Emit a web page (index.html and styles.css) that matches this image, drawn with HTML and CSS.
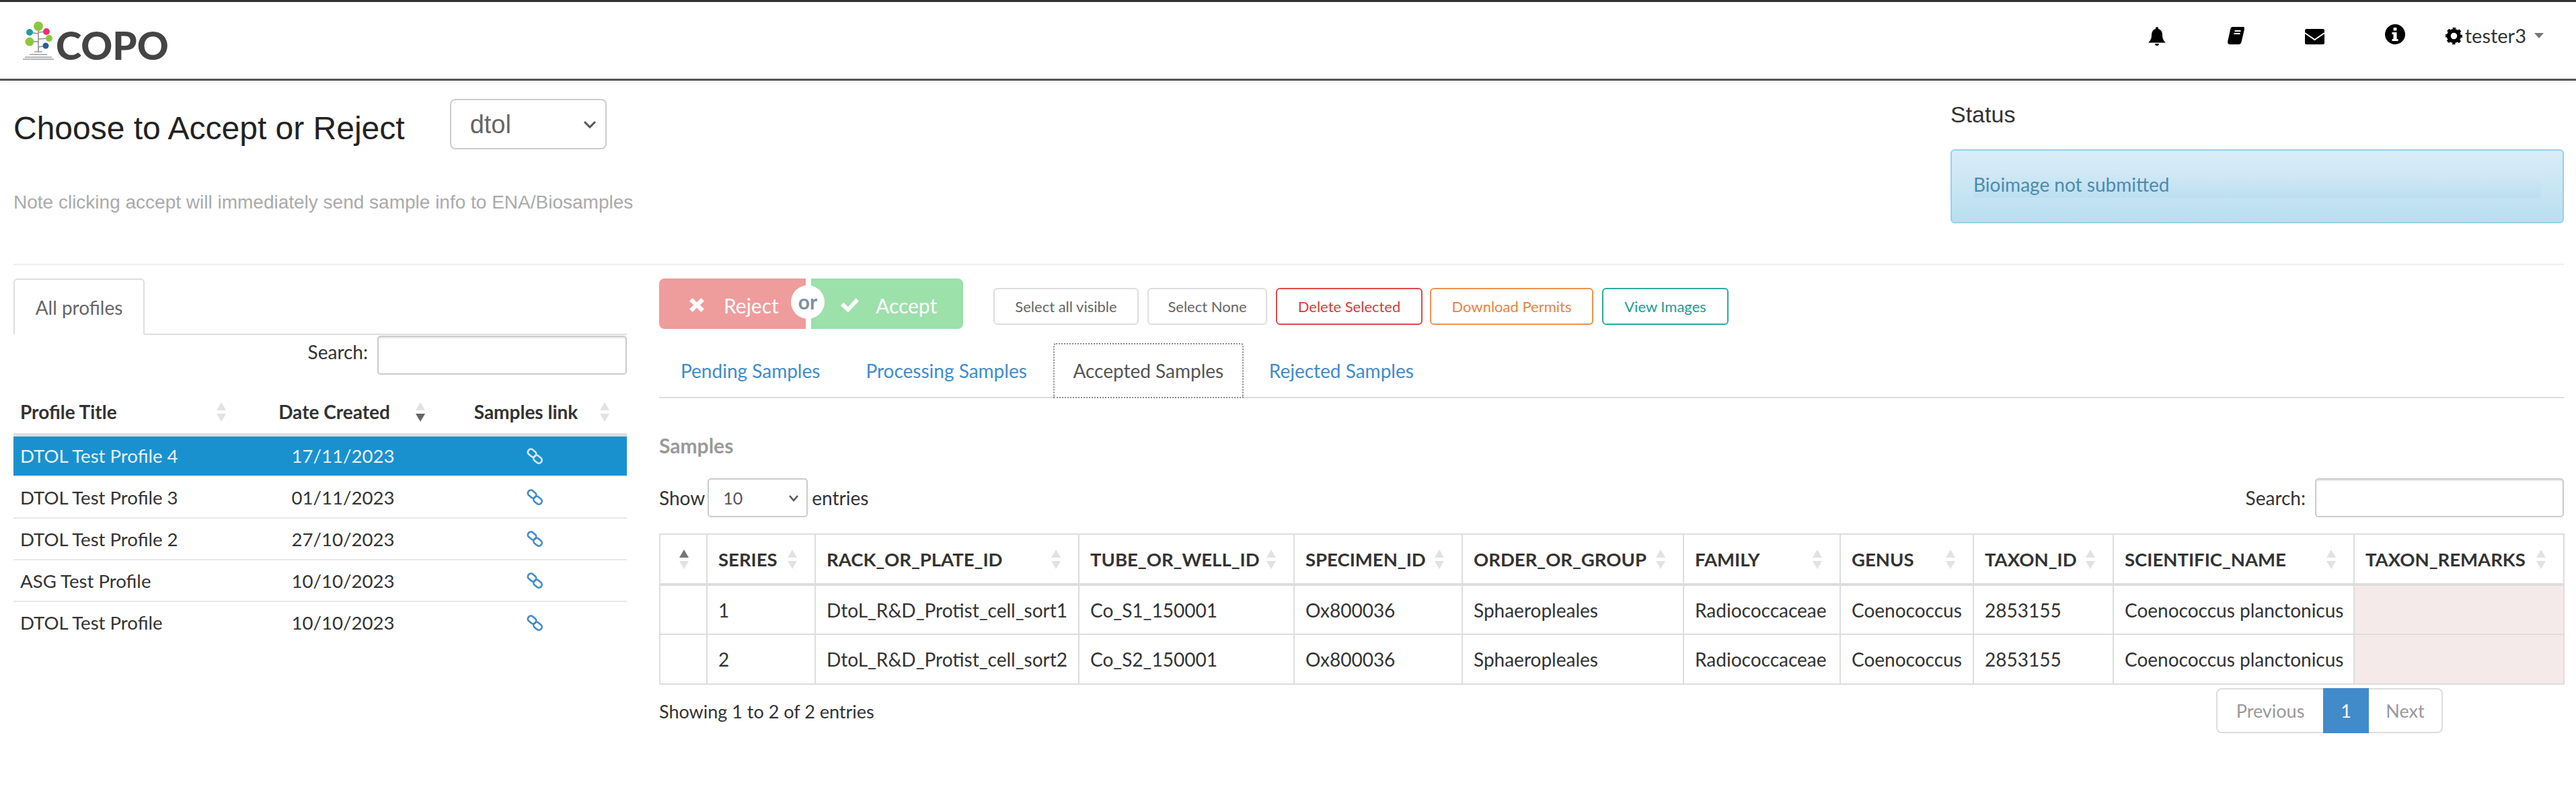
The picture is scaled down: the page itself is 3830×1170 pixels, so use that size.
FILE: index.html
```html
<!DOCTYPE html>
<html lang="en">
<head>
    <meta charset="UTF-8">
    <title>COPO - Accept or Reject Samples</title>
    <link rel="stylesheet" href="styles.css">
</head>
<body>
    <header class="topbar">
        <a class="logo">
            <svg class="logo-tree" viewBox="0 0 46 58" width="46" height="58">
                <path d="M23 6V46M23 18L10 16M23 16L35 15M23 30L10 30M23 26L39 25M23 38L34 36" stroke="#8a8f96" stroke-width="1.6" fill="none"/>
                <circle cx="23" cy="7" r="7" fill="#8cc63f"/>
                <circle cx="10" cy="16" r="5" fill="#1f9ea3"/>
                <circle cx="35" cy="15" r="5" fill="#e8336d"/>
                <circle cx="39" cy="25" r="5" fill="#8cc63f"/>
                <circle cx="10" cy="30" r="6.5" fill="#8cc63f"/>
                <circle cx="34" cy="36" r="4.5" fill="#2b5c9e"/>
                <path d="M17 45H29M10 49H36M3 53H43M0 56H46" stroke="#9a9da1" stroke-width="1.6" fill="none"/>
            </svg>
            <span class="logo-text">COPO</span>
        </a>
        <nav class="topnav">
            <svg class="nav-icon icon-bell" viewBox="0 0 26 28" width="26" height="28"><path d="M13 0c1.1 0 2 .9 2 2v1c4 1 6 4.5 6 9 0 5 1.5 8 5 11.500H0C3.500 20 5 17 5 12c0-4.500 2-8 6-9V2c0-1.100.9-2 2-2zM10 25h6c0 1.800-1.300 3-3 3s-3-1.200-3-3z"/></svg>
            <svg class="nav-icon icon-book" viewBox="0 0 25 26" width="25" height="26"><path d="M7 0h16c1.500 0 2.200 1 1.800 2.500L20.500 21c-.4 1.600-1.500 3-3.500 3H4c-1.500 0-1.800-1-1.400-2h14.400c1.500 0 2.300-.7 2.700-2L24.500 3l.5.5-4.500 19c-.5 2-2 3.500-4 3.500H3.500C1 26-.5 24 .2 21.500L4.500 2C4.800.800 5.800 0 7 0z"/><path d="M10.500 6h9M9.500 10h9" stroke="#fff" stroke-width="2"/></svg>
            <svg class="nav-icon icon-mail" viewBox="0 0 29 23" width="29" height="23"><rect width="29" height="23" rx="2.500"/><path d="M0 6L14.500 16L29 6" stroke="#fff" stroke-width="2" fill="none"/></svg>
            <svg class="nav-icon icon-info" viewBox="0 0 30 30" width="30" height="30"><circle cx="15" cy="15" r="15"/><rect x="12.500" y="5" width="5" height="4.500" rx="1" fill="#fff"/><path d="M10.500 12h7v10h2v3h-9v-3h2v-7h-2z" fill="#fff"/></svg>
            <span class="user-menu">
                <svg class="icon-gear" viewBox="0 0 26 26" width="25" height="25"><circle cx="13" cy="13" r="8" fill="none" stroke="#000" stroke-width="6"/><circle cx="13" cy="13" r="11" fill="none" stroke="#000" stroke-width="4.500" stroke-dasharray="4.300 4.340" stroke-dashoffset="2.100"/></svg>
                <span class="user-name">tester3</span>
                <i class="caret"></i>
            </span>
        </nav>
    </header>

    <main class="page">
        <section class="intro">
            <div class="intro-left">
                <div class="title-row">
                    <h1>Choose to Accept or Reject</h1>
                    <select class="group-select"><option>dtol</option></select>
                </div>
                <p class="note">Note clicking accept will immediately send sample info to ENA/Biosamples</p>
            </div>
            <div class="status">
                <h2>Status</h2>
                <div class="alert"><p>Bioimage not submitted</p></div>
            </div>
        </section>

        <section class="content">
            <aside class="profiles">
                <ul class="tabs tabs-left"><li class="tab active">All profiles</li></ul>
                <div class="search-row search-left">
                    <label>Search:</label><input type="text">
                </div>
                <table class="profile-table">
                    <colgroup><col class="p1"><col class="p2"><col class="p3"></colgroup>
                    <thead>
                        <tr>
                            <th><div class="th-in left"><span>Profile Title</span><i class="sort"></i></div></th>
                            <th><div class="th-in"><span>Date Created</span><i class="sort desc"></i></div></th>
                            <th><div class="th-in"><span>Samples link</span><i class="sort"></i></div></th>
                        </tr>
                    </thead>
                    <tbody>
                        <tr class="selected">
                            <td>DTOL Test Profile 4</td><td class="center">17/11/2023</td>
                            <td class="center"><svg class="chain" viewBox="0 0 27 26" width="27" height="26"><rect x="2.500" y="4" width="13" height="9" rx="4" transform="rotate(40 9 8.500)"/><rect x="11" y="13.300" width="13" height="9" rx="4" transform="rotate(40 17.500 17.800)"/></svg></td>
                        </tr>
                        <tr>
                            <td>DTOL Test Profile 3</td><td class="center">01/11/2023</td>
                            <td class="center"><svg class="chain" viewBox="0 0 27 26" width="27" height="26"><rect x="2.500" y="4" width="13" height="9" rx="4" transform="rotate(40 9 8.500)"/><rect x="11" y="13.300" width="13" height="9" rx="4" transform="rotate(40 17.500 17.800)"/></svg></td>
                        </tr>
                        <tr>
                            <td>DTOL Test Profile 2</td><td class="center">27/10/2023</td>
                            <td class="center"><svg class="chain" viewBox="0 0 27 26" width="27" height="26"><rect x="2.500" y="4" width="13" height="9" rx="4" transform="rotate(40 9 8.500)"/><rect x="11" y="13.300" width="13" height="9" rx="4" transform="rotate(40 17.500 17.800)"/></svg></td>
                        </tr>
                        <tr>
                            <td>ASG Test Profile</td><td class="center">10/10/2023</td>
                            <td class="center"><svg class="chain" viewBox="0 0 27 26" width="27" height="26"><rect x="2.500" y="4" width="13" height="9" rx="4" transform="rotate(40 9 8.500)"/><rect x="11" y="13.300" width="13" height="9" rx="4" transform="rotate(40 17.500 17.800)"/></svg></td>
                        </tr>
                        <tr>
                            <td>DTOL Test Profile</td><td class="center">10/10/2023</td>
                            <td class="center"><svg class="chain" viewBox="0 0 27 26" width="27" height="26"><rect x="2.500" y="4" width="13" height="9" rx="4" transform="rotate(40 9 8.500)"/><rect x="11" y="13.300" width="13" height="9" rx="4" transform="rotate(40 17.500 17.800)"/></svg></td>
                        </tr>
                    </tbody>
                </table>
            </aside>

            <div class="samples">
                <div class="actions">
                    <div class="decide">
                        <button class="decide-btn reject">
                            <svg viewBox="3 3 19 18" width="22" height="21"><path d="M3 7l4-4 5.500 5.500L18 3l4 4-5.500 5 5.500 5-4 4-5.500-5.500L7 21l-4-4 5.500-5z" fill="#fff"/></svg>
                            <span>Reject</span>
                        </button>
                        <span class="or">or</span>
                        <button class="decide-btn accept">
                            <svg viewBox="2 3 25 20" width="27" height="22"><path d="M2 13l4-4 6 6L23 3l4 4-15 16z" fill="#fff"/></svg>
                            <span>Accept</span>
                        </button>
                    </div>
                    <button class="btn btn-all">Select all visible</button>
                    <button class="btn btn-none">Select None</button>
                    <button class="btn btn-delete">Delete Selected</button>
                    <button class="btn btn-permits">Download Permits</button>
                    <button class="btn btn-images">View Images</button>
                </div>

                <ul class="tabs tabs-samples">
                    <li class="tab tab-link">Pending Samples</li>
                    <li class="tab tab-link">Processing Samples</li>
                    <li class="tab active focused">Accepted Samples</li>
                    <li class="tab tab-link">Rejected Samples</li>
                </ul>

                <h3 class="samples-title">Samples</h3>

                <div class="table-controls">
                    <div class="show-entries">
                        <label>Show</label>
                        <select class="len-select"><option>10</option></select>
                        <label>entries</label>
                    </div>
                    <div class="search-row">
                        <label>Search:</label><input type="text" class="search-wide">
                    </div>
                </div>

                <table class="sample-table">
                    <colgroup>
                        <col class="c0"><col class="c1"><col class="c2"><col class="c3"><col class="c4"><col class="c5">
                        <col class="c6"><col class="c7"><col class="c8"><col class="c9"><col class="c10">
                    </colgroup>
                    <thead>
                        <tr>
                            <th><div class="th-in left"><span></span><i class="sort asc"></i></div></th>
                            <th><div class="th-in left"><span>SERIES</span><i class="sort"></i></div></th>
                            <th><div class="th-in left"><span>RACK_OR_PLATE_ID</span><i class="sort"></i></div></th>
                            <th><div class="th-in left"><span>TUBE_OR_WELL_ID</span><i class="sort"></i></div></th>
                            <th><div class="th-in left"><span>SPECIMEN_ID</span><i class="sort"></i></div></th>
                            <th><div class="th-in left"><span>ORDER_OR_GROUP</span><i class="sort"></i></div></th>
                            <th><div class="th-in left"><span>FAMILY</span><i class="sort"></i></div></th>
                            <th><div class="th-in left"><span>GENUS</span><i class="sort"></i></div></th>
                            <th><div class="th-in left"><span>TAXON_ID</span><i class="sort"></i></div></th>
                            <th><div class="th-in left"><span>SCIENTIFIC_NAME</span><i class="sort"></i></div></th>
                            <th><div class="th-in left"><span>TAXON_REMARKS</span><i class="sort"></i></div></th>
                        </tr>
                    </thead>
                    <tbody>
                        <tr>
                            <td></td><td>1</td><td>DtoL_R&amp;D_Protist_cell_sort1</td><td>Co_S1_150001</td><td>Ox800036</td>
                            <td>Sphaeropleales</td><td>Radiococcaceae</td><td>Coenococcus</td><td>2853155</td><td>Coenococcus planctonicus</td>
                            <td class="missing"></td>
                        </tr>
                        <tr>
                            <td></td><td>2</td><td>DtoL_R&amp;D_Protist_cell_sort2</td><td>Co_S2_150001</td><td>Ox800036</td>
                            <td>Sphaeropleales</td><td>Radiococcaceae</td><td>Coenococcus</td><td>2853155</td><td>Coenococcus planctonicus</td>
                            <td class="missing"></td>
                        </tr>
                    </tbody>
                </table>

                <div class="table-footer">
                    <div class="info">Showing 1 to 2 of 2 entries</div>
                    <div class="pager">
                        <a class="page-prev">Previous</a>
                        <a class="page-cur">1</a>
                        <a class="page-next">Next</a>
                    </div>
                </div>
            </div>
        </section>
    </main>
</body>
</html>
```
FILE: styles.css
```css
/* General */
body {
    margin: 0;
    background: #fff;
    font-family: Lato, "Liberation Sans", sans-serif;
    font-size: 28px;
    color: #333;
}

* {
    box-sizing: border-box;
}

/* Top bar */
.topbar {
    height: 120px;
    border-top: 3px solid #333;
    border-bottom: 3px solid #555;
    box-shadow: 0 2px 6px rgba(0, 0, 0, 0.08);
    display: flex;
    justify-content: space-between;
    padding: 0 48px 0 34px;
}

.logo {
    display: flex;
    align-items: flex-start;
    padding-top: 29px;
}

.logo-text {
    font-size: 58px;
    font-weight: 900;
    line-height: 57px;
    color: #444;
    margin: 6px 0 0 3px;
}

.topnav {
    display: flex;
    align-items: flex-start;
}

.nav-icon {
    display: block;
    fill: #000;
}

.icon-bell { margin: 37px 0 0 0; }
.icon-book { margin: 37px 0 0 92px; }
.icon-mail { margin: 40px 0 0 90px; }
.icon-info { margin: 33px 0 0 90px; }

.user-menu {
    display: flex;
    align-items: center;
    margin: 37px 0 0 60px;
}

.user-name {
    font-size: 29px;
    line-height: 26px;
    color: #333;
    margin-left: 4px;
}

.caret {
    border-left: 7px solid transparent;
    border-right: 7px solid transparent;
    border-top: 8px solid #777;
    margin-left: 12px;
}

/* Page */
.page {
    padding: 0 18px 0 20px;
}

.intro {
    display: flex;
    justify-content: space-between;
    height: 274px;
    border-bottom: 2px solid #eee;
}

.title-row {
    display: flex;
    align-items: flex-start;
    padding-top: 27px;
}

h1 {
    font-family: "Liberation Sans", Arial, sans-serif;
    font-weight: 400;
    font-size: 48px;
    line-height: 56px;
    color: #222;
    margin: 16px 0 0 0;
}

.group-select {
    width: 233px;
    height: 75px;
    margin-left: 67px;
    padding-left: 28px;
    appearance: none;
    font-family: "Liberation Sans", Arial, sans-serif;
    font-size: 38px;
    color: #666;
    background: #fff url("data:image/svg+xml,%3Csvg xmlns='http://www.w3.org/2000/svg' viewBox='0 0 20 12'%3E%3Cpath d='M2 2l8 8 8-8' fill='none' stroke='%23555' stroke-width='3'/%3E%3C/svg%3E") no-repeat right 13px center / 20px 12px;
    border: 2px solid #ccc;
    border-radius: 8px;
}

.note {
    font-family: "Liberation Sans", Arial, sans-serif;
    font-size: 28px;
    line-height: 30px;
    color: #aaa;
    margin: 64px 0 0 0;
}

.status {
    width: 912px;
}

.status h2 {
    font-family: "Liberation Sans", Arial, sans-serif;
    font-weight: 400;
    font-size: 34px;
    line-height: 40px;
    color: #333;
    margin: 30px 0 0 0;
}

.alert {
    height: 110px;
    margin-top: 32px;
    padding: 31px 32px 0 32px;
    background: linear-gradient(#d9edf7, #b9def0);
    border: 2px solid #9acfea;
    border-radius: 6px;
}

.alert p {
    margin: 0;
    height: 39px;
    line-height: 39px;
    font-size: 28px;
    color: #4a8bb0;
    background: linear-gradient(#d3e9f5, #bcdff0);
}

/* Content */
.content {
    display: flex;
    justify-content: space-between;
    padding-top: 20px;
}

.profiles {
    width: 912px;
}

.samples {
    width: 2832px;
    margin-top: 0;
}

.tabs {
    display: flex;
    list-style: none;
    margin: 0;
    padding: 0;
    border-bottom: 2px solid #ddd;
}

.tab {
    color: #555;
}

.tabs-left .tab {
    width: 195px;
    height: 84px;
    margin-bottom: -2px;
    line-height: 82px;
    text-align: center;
    border: 2px solid #ddd;
    border-bottom: 2px solid #fff;
    border-radius: 6px 6px 0 0;
    font-size: 28px;
    color: #666;
}

.search-row {
    display: flex;
    align-items: center;
    justify-content: flex-end;
}

.search-row label {
    margin-right: 14px;
}

.search-row input {
    height: 58px;
    width: 371px;
    background: #fff;
    border: 2px solid #ccc;
    border-radius: 5px;
    box-shadow: inset 0 2px 2px rgba(0, 0, 0, 0.1);
}

.search-row .search-wide {
    width: 370px;
}

.search-left {
    margin-top: 1px;
}

.search-left label {
    margin-bottom: 10px;
}

/* Sort arrows */
.sort {
    flex: none;
    width: 14px;
    display: flex;
    flex-direction: column;
    gap: 5px;
    margin: 0 26px 0 0;
}

.sort::before,
.sort::after {
    content: "";
    display: block;
    border-left: 7px solid transparent;
    border-right: 7px solid transparent;
}

.sort::before {
    border-bottom: 12px solid #e2e2e2;
}

.sort::after {
    border-top: 12px solid #e2e2e2;
}

.sort.asc::before {
    border-bottom-color: #777;
}

.sort.desc::after {
    border-top-color: #666;
}

.th-in {
    display: flex;
    align-items: center;
    height: 100%;
}

.th-in span {
    flex: 1;
    padding-left: 14px;
    text-align: center;
    white-space: nowrap;
}

.th-in.left span {
    text-align: left;
}

/* Profile table */
.profile-table {
    width: 100%;
    table-layout: fixed;
    border-collapse: collapse;
    margin-top: 24px;
}

.p1 { width: 342px; }
.p2 { width: 296px; }
.p3 { width: 274px; }

.profile-table th {
    height: 65px;
    padding: 0;
    border-bottom: 5px solid #ddd;
    font-size: 28px;
    font-weight: 700;
}

.profile-table th .th-in.left span {
    padding-left: 10px;
}

.profile-table td {
    height: 62px;
    padding: 0 0 0 10px;
    border-bottom: 2px solid #e8e8e8;
    font-size: 27.6px;
}

.profile-table tr:last-child td {
    border-bottom: none;
}

.profile-table td.center {
    padding: 0;
    text-align: center;
}

.profile-table .selected td {
    background: #1a91cf;
    color: #e6f3fa;
}

.chain {
    display: block;
    margin: 0 auto;
    fill: none;
    stroke: #428bca;
    stroke-width: 2.600;
}

.selected .chain {
    stroke: #d5e9f5;
}

/* Actions */
.actions {
    display: flex;
    align-items: flex-start;
    height: 75px;
}

.decide {
    position: relative;
    display: flex;
    width: 452px;
    height: 75px;
    margin-right: 45px;
    gap: 8px;
}

.decide-btn {
    display: flex;
    align-items: center;
    border: none;
    color: #fff;
    font-family: Lato, sans-serif;
    font-size: 30px;
    padding: 4px 0 0 0;
}

.reject {
    width: 218px;
    background: #ef9c9c;
    border-radius: 8px 0 0 8px;
    padding-left: 45px;
    gap: 29px;
}

.accept {
    width: 226px;
    background: #9ce0aa;
    border-radius: 0 8px 8px 0;
    padding-left: 44px;
    gap: 25px;
}

.or {
    position: absolute;
    left: 196px;
    top: 10px;
    width: 50px;
    height: 50px;
    border-radius: 50%;
    background: #fff;
    color: #7d8fa3;
    font-size: 30px;
    font-weight: 700;
    line-height: 48px;
    text-align: center;
}

.btn {
    height: 55px;
    margin: 14px 13px 0 0;
    padding: 0;
    background: #fff;
    border: 2px solid #ddd;
    border-radius: 6px;
    font-family: Lato, sans-serif;
    font-size: 22px;
    color: #666;
}

.btn-all { width: 216px; }
.btn-none { width: 178px; }

.btn-delete {
    width: 218px;
    margin-right: 11px;
    border-color: #dc4a4a;
    color: #dc3a3a;
}

.btn-permits {
    width: 243px;
    border-color: #f0914d;
    color: #f0813a;
}

.btn-images {
    width: 188px;
    border-color: #2aa9a0;
    color: #1d9c93;
}

/* Sample tabs */
.tabs-samples {
    height: 82px;
    margin-top: 21px;
}

.tabs-samples .tab {
    height: 82px;
    line-height: 82px;
    text-align: center;
}

.tab-link {
    color: #428bca;
    padding: 0 36px 0 32px;
}

.tabs-samples .focused {
    width: 283px;
    margin: 0 6px -1px 3px;
    color: #555;
    border: 2px dotted #888;
    border-radius: 4px 4px 0 0;
    line-height: 78px;
    background: #fff;
}

.samples-title {
    font-size: 30px;
    font-weight: 700;
    line-height: 30px;
    color: #999;
    margin: 55px 0 0 0;
}

.table-controls {
    display: flex;
    justify-content: space-between;
    align-items: center;
    margin-top: 34px;
}

.show-entries {
    display: flex;
    align-items: center;
}

.len-select {
    width: 149px;
    height: 58px;
    margin: 0 6px 0 4px;
    padding-left: 21px;
    appearance: none;
    font-family: Lato, sans-serif;
    font-size: 25px;
    color: #555;
    background: #fff url("data:image/svg+xml,%3Csvg xmlns='http://www.w3.org/2000/svg' viewBox='0 0 16 11'%3E%3Cpath d='M2 2l6 7 6-7' fill='none' stroke='%23555' stroke-width='2.500'/%3E%3C/svg%3E") no-repeat right 11px center / 16px 11px;
    border: 2px solid #ccc;
    border-radius: 5px;
}

/* Sample table */
.sample-table {
    width: 100%;
    table-layout: fixed;
    border-collapse: collapse;
    margin-top: 24px;
}

.c0 { width: 70px; }
.c1 { width: 161px; }
.c2 { width: 392px; }
.c3 { width: 320px; }
.c4 { width: 250px; }
.c5 { width: 329px; }
.c6 { width: 233px; }
.c7 { width: 198px; }
.c8 { width: 208px; }
.c9 { width: 358px; }
.c10 { width: 312px; }

.sample-table th,
.sample-table td {
    border: 2px solid #ddd;
    padding: 0;
    white-space: nowrap;
}

.sample-table th {
    height: 75px;
    border-bottom-width: 4px;
    font-size: 27.5px;
    font-weight: 700;
}

.sample-table th .th-in.left span {
    padding-left: 16px;
}

.sample-table td {
    height: 74px;
    padding-left: 16px;
    font-size: 28px;
}

.sample-table .missing {
    background: #f5eaea;
}

.table-footer {
    display: flex;
    justify-content: space-between;
    padding-right: 180px;
}

.info {
    margin-top: 23px;
    font-size: 27px;
}

.pager {
    display: flex;
    height: 67px;
    margin-top: 5px;
    font-size: 27px;
    line-height: 63px;
    border: 2px solid #ddd;
    border-radius: 8px;
    color: #999;
}

.page-prev {
    width: 157px;
    text-align: center;
}

.page-cur {
    width: 68px;
    margin: -2px 0;
    height: 67px;
    line-height: 67px;
    text-align: center;
    background: #428bca;
    color: #fff;
}

.page-next {
    width: 108px;
    text-align: center;
}
```
